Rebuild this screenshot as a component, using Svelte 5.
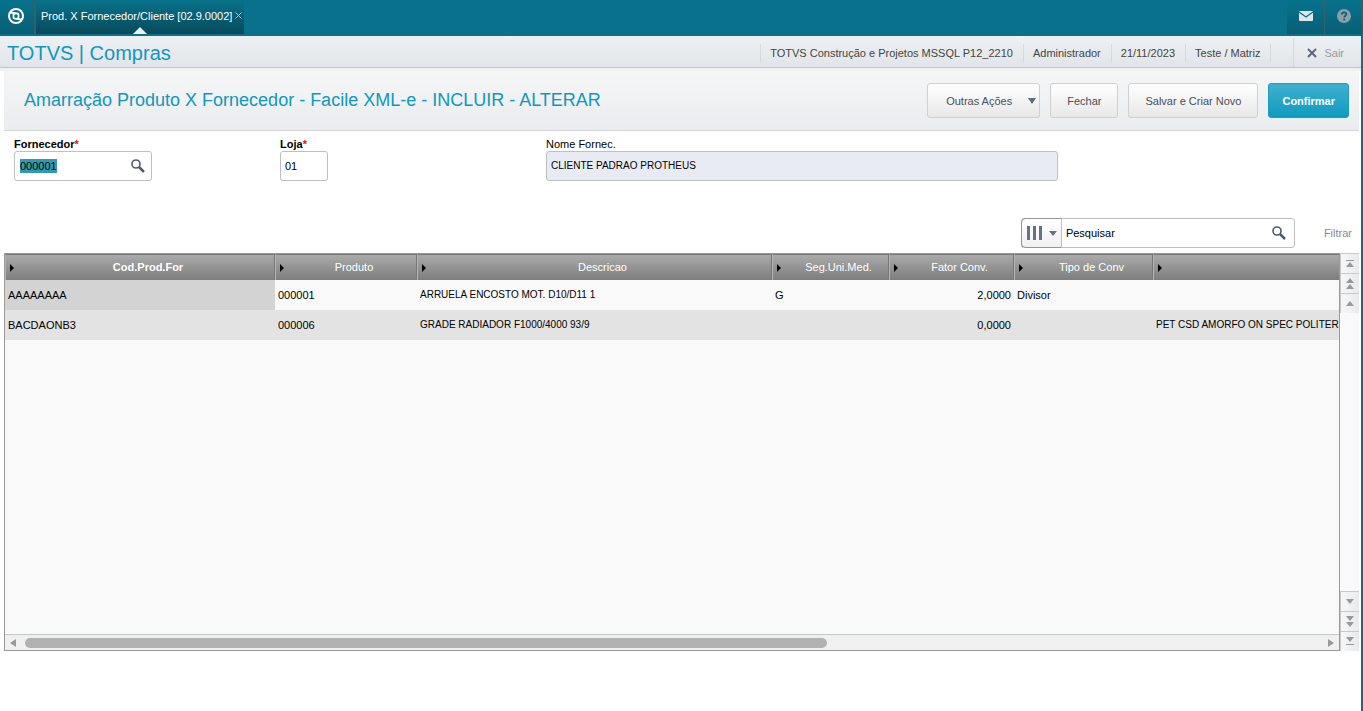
<script>
  import { onMount } from 'svelte';

  let supplierInput;
  let supplier = '000001';
  let store = '01';
  let supplierName = 'CLIENTE PADRAO PROTHEUS';
  let search = 'Pesquisar';

  const session = [
    'TOTVS Construção e Projetos MSSQL P12_2210',
    'Administrador',
    '21/11/2023',
    'Teste / Matriz'
  ];

  const columns = [
    { label: 'Cod.Prod.For', width: 270, sorted: true },
    { label: 'Produto', width: 142 },
    { label: 'Descricao', width: 355, description: true },
    { label: 'Seg.Uni.Med.', width: 117 },
    { label: 'Fator Conv.', width: 125, numeric: true },
    { label: 'Tipo de Conv', width: 139 },
    { label: '', description: true }
  ];

  const rows = [
    ['AAAAAAAA', '000001', 'ARRUELA ENCOSTO MOT. D10/D11 1', 'G', '2,0000', 'Divisor', ''],
    ['BACDAONB3', '000006', 'GRADE RADIADOR F1000/4000 93/9', '', '0,0000', '', 'PET CSD AMORFO ON SPEC POLITER']
  ];

  // Icons of the vertical navigation buttons
  const navUp = [
    { label: 'Primeiro registro', d: 'M1 2h8v1H1zM5 4l4 5H1z' },
    { label: 'Página anterior', d: 'M5 0l4 5H1zM5 6l4 5H1z' },
    { label: 'Registro anterior', d: 'M5 3l4 5H1z' }
  ];
  const navDown = [
    { label: 'Próximo registro', d: 'M1 3h8l-4 5z' },
    { label: 'Próxima página', d: 'M1 0h8l-4 5zM1 6h8l-4 5z' },
    { label: 'Último registro', d: 'M1 1h8l-4 5zM1 8h8v1H1z' }
  ];

  onMount(() => {
    supplierInput.focus();
    supplierInput.select();
  });
</script>

{#snippet magnifier()}
  <svg width="14" height="14" viewBox="0 0 14 14" aria-hidden="true">
    <circle cx="5" cy="5" r="4" fill="none" stroke="#4d5a6e" stroke-width="1.6" />
    <path d="M8 8l5 5" stroke="#4d5a6e" stroke-width="2.5" />
  </svg>
{/snippet}

<div class="app">
  <header class="topbar">
    <button class="logo" aria-label="Menu">
      <svg width="18" height="18" viewBox="0 0 18 18">
        <circle cx="9" cy="9" r="7" fill="none" stroke="#fff" stroke-width="2" />
        <path d="M3 5.500L10.500 6.500q1 .2 1 1V12.500M15 12.500L7.500 11.500q-1-.2-1-1V5.500" fill="none" stroke="#fff" stroke-width="1.8" />
      </svg>
    </button>
    <div class="tab">
      <span>Prod. X Fornecedor/Cliente [02.9.0002]</span>
      <button class="tab-close" aria-label="Fechar aba">
        <svg width="7" height="7" viewBox="0 0 7 7"><path d="M.5 .5l6 6M6.500 .5l-6 6" stroke="#9dc3cd" /></svg>
      </button>
      <i class="tab-arrow"></i>
    </div>
    <div class="spacer"></div>
    <button class="tool" aria-label="Mensagens">
      <svg width="14" height="10" viewBox="0 0 14 10">
        <rect width="14" height="10" rx="1" fill="#dfe6e9" />
        <path d="M0 1l7 5 7-5" fill="none" stroke="#087089" stroke-width="1.4" />
      </svg>
    </button>
    <button class="tool" aria-label="Ajuda">
      <svg width="14" height="14" viewBox="0 0 14 14">
        <circle cx="7" cy="7" r="7" fill="#8d9fa8" />
        <path d="M4.800 5.500c0-3 4.600-2.800 4.500-.2C9.200 6.800 7.200 6.700 7.200 8.600M7.200 9.700v1.800" fill="none" stroke="#0a6076" stroke-width="1.8" />
      </svg>
    </button>
  </header>

  <div class="infobar">
    <h1>TOTVS | Compras</h1>
    <ul class="session">
      {#each session as item}
        <li>{item}</li>
      {/each}
    </ul>
    <button class="exit">
      <svg width="10" height="10" viewBox="0 0 10 10"><path d="M1 1l8 8M9 1L1 9" stroke="#5f6878" stroke-width="2" /></svg>
      Sair
    </button>
  </div>

  <main>
    <section class="titlebar">
      <h2>Amarração Produto X Fornecedor - Facile XML-e - INCLUIR - ALTERAR</h2>
      <div class="actions">
        <button class="btn more">
          Outras Ações
          <svg width="8" height="6" viewBox="0 0 8 6"><path d="M0 0h8L4 6z" fill="#626a7c" /></svg>
        </button>
        <button class="btn">Fechar</button>
        <button class="btn">Salvar e Criar Novo</button>
        <button class="btn primary">Confirmar</button>
      </div>
    </section>

    <form class="fields">
      <div class="field">
        <label class="required" for="supplier">Fornecedor<em>*</em></label>
        <div class="box supplier">
          <input id="supplier" bind:this={supplierInput} bind:value={supplier} />
          <button type="button" aria-label="Pesquisar fornecedor">{@render magnifier()}</button>
        </div>
      </div>
      <div class="field">
        <label class="required" for="store">Loja<em>*</em></label>
        <div class="box store"><input id="store" bind:value={store} /></div>
      </div>
      <div class="field">
        <label for="name">Nome Fornec.</label>
        <div class="box readonly"><input id="name" value={supplierName} readonly /></div>
      </div>
    </form>

    <div class="searchbar">
      <div class="box search">
        <button class="column-picker" aria-label="Colunas">
          <svg width="31" height="14" viewBox="0 0 31 14">
            <path d="M1 0h3v14H1zM7 0h3v14H7zM13 0h3v14h-3zM23 5h8l-4 5z" fill="#677084" />
          </svg>
        </button>
        <input aria-label="Pesquisar" bind:value={search} />
        <button aria-label="Buscar">{@render magnifier()}</button>
      </div>
      <a href="#filtrar">Filtrar</a>
    </div>

    <section class="browse">
      <div class="grid">
        <div class="rows">
          <table>
            <colgroup>
              {#each columns as col}
                <col style={col.width ? `width: ${col.width}px` : ''} />
              {/each}
            </colgroup>
            <thead>
              <tr>
                {#each columns as col}
                  <th class:sorted={col.sorted}>{col.label}</th>
                {/each}
              </tr>
            </thead>
            <tbody>
              {#each rows as row, r}
                <tr>
                  {#each row as cell, c}
                    <td
                      class:numeric={columns[c].numeric}
                      class:description={columns[c].description}
                      class:current={r === 0 && c === 0}
                    >{cell}</td>
                  {/each}
                </tr>
              {/each}
            </tbody>
          </table>
        </div>
        <div class="hscroll">
          <button aria-label="Rolar para a esquerda">
            <svg width="6" height="8" viewBox="0 0 6 8"><path d="M6 0v8L0 4z" fill="#999" /></svg>
          </button>
          <div class="track"><div class="thumb"></div></div>
          <button aria-label="Rolar para a direita">
            <svg width="6" height="8" viewBox="0 0 6 8"><path d="M0 0v8l6-4z" fill="#999" /></svg>
          </button>
        </div>
      </div>
      <nav class="vnav">
        {#each navUp as item}
          <button aria-label={item.label}>
            <svg width="10" height="11" viewBox="0 0 10 11"><path d={item.d} fill="#999" /></svg>
          </button>
        {/each}
        <div class="spacer"></div>
        {#each navDown as item}
          <button aria-label={item.label}>
            <svg width="10" height="11" viewBox="0 0 10 11"><path d={item.d} fill="#999" /></svg>
          </button>
        {/each}
      </nav>
    </section>
  </main>
</div>

<style>
  :global(body) {
    margin: 0;
    background: #fff;
  }

  .app {
    box-sizing: border-box;
    display: flex;
    flex-direction: column;
    min-height: 100vh;
    border-right: 2px solid #0a718d;
    font-family: 'Liberation Sans', Arial, sans-serif;
    font-size: 11px;
    line-height: 14px;
    color: #000;
  }

  .app * {
    box-sizing: border-box;
  }

  button {
    display: flex;
    align-items: center;
    justify-content: center;
    padding: 0;
    border: 0;
    background: none;
    font: inherit;
    color: inherit;
  }

  svg {
    display: block;
    flex: none;
  }

  .spacer {
    flex: 1;
  }

  /* Top bar */
  .topbar {
    display: flex;
    height: 36px;
    padding-bottom: 2px;
    margin-right: -2px;
    background: #0a718d;
  }

  .logo {
    width: 35px;
    padding: 0 3px 2px 0;
    border-right: 1px solid #35616c;
    background: linear-gradient(#08728d, #075f75);
  }

  .tab {
    position: relative;
    display: flex;
    align-items: center;
    gap: 3px;
    margin-left: 1px;
    padding: 0 2px 2px 5px;
    background: linear-gradient(#08728a, #064a5b);
    color: #fff;
  }

  .tab-close {
    padding-bottom: 2px;
  }

  .tab-arrow {
    position: absolute;
    left: 50%;
    bottom: 0;
    margin-left: -7px;
    border: 7px solid transparent;
    border-top: 0;
    border-bottom-color: #eef1f3;
  }

  .tool {
    width: 38px;
    height: 34px;
    padding-bottom: 2px;
    border-right: 1px solid #35616c;
    background: linear-gradient(#08728d, #075f75);
  }

  .infobar {
    display: flex;
    align-items: center;
    height: 32px;
    padding: 2px 0 0 7px;
    border-bottom: 1px solid #bcc5cc;
    background: linear-gradient(#eef1f3, #e1e5e9);
    color: #444;
  }

  h1,
  h2 {
    margin: 0;
    font-weight: normal;
    color: #0f98bd;
  }

  h1 {
    flex: 1;
    font-size: 20px;
    line-height: 24px;
  }

  h2 {
    padding-bottom: 2px;
    font-size: 18px;
    line-height: 22px;
  }

  .session {
    display: flex;
    margin: 0;
    padding: 0;
    list-style: none;
    line-height: 18px;
  }

  .session li {
    padding: 0 10px 0 9px;
    border-right: 1px solid #d6dbd9;
  }

  .session li:first-child {
    border-left: 1px solid #d6dbd9;
  }

  .exit {
    gap: 7px;
    height: 28px;
    margin-left: 22px;
    padding: 0 17px 0 13px;
    border-left: 1px solid #d3d8da;
    color: #949ba5;
  }

  /* Content */
  main {
    display: flex;
    flex: 1;
    flex-direction: column;
    padding: 0 2px 60px 4px;
    border-top: 3px solid #f0f1f2;
  }

  .titlebar {
    display: flex;
    align-items: center;
    justify-content: space-between;
    height: 60px;
    padding: 0 10px 0 20px;
    border-bottom: 1px solid #d5d6d8;
    background: linear-gradient(#f5f6f6, #ebecef);
  }

  .actions {
    display: flex;
    gap: 10px;
  }

  .btn {
    height: 35px;
    padding: 0 16px;
    border: 1px solid #d0d0d0;
    border-radius: 3px;
    background: linear-gradient(#fff, #e8e8e8);
    color: #4b4f58;
  }

  .more {
    gap: 16px;
    padding: 0 3px 0 18px;
  }

  .primary {
    padding: 0 13px;
    border-color: #1f9cbd;
    background: linear-gradient(#3fafce, #0f9bc0);
    font-weight: bold;
    color: #fff;
  }

  .fields {
    display: grid;
    grid-template-columns: 266px 266px 1fr;
    padding: 6px 10px 0;
  }

  .field label {
    display: block;
    height: 14px;
  }

  .required {
    font-weight: bold;
  }

  .required em {
    font-style: normal;
    color: #f00;
  }

  .box {
    display: flex;
    align-items: center;
    height: 30px;
    border: 1px solid #bdbfc1;
    border-radius: 3px;
    background: #fff;
  }

  .box input {
    flex: 1;
    min-width: 0;
    height: 14px;
    padding: 0 4px;
    border: 0;
    outline: 0;
    background: none;
    font: inherit;
    color: #000;
  }

  .box input::selection {
    background: #309ab3;
    color: #000;
  }

  .supplier {
    width: 138px;
    padding-right: 6px;
  }

  .supplier input {
    padding-left: 5px;
  }

  .store {
    width: 48px;
  }

  .readonly {
    max-width: 512px;
    background: #e8ebf4;
  }

  .readonly input {
    font-size: 10px;
  }

  .searchbar {
    display: flex;
    align-items: center;
    justify-content: flex-end;
    gap: 29px;
    margin: 37px 7px 5px 0;
  }

  .search {
    width: 274px;
    padding-right: 8px;
  }

  .column-picker {
    width: 41px;
    height: 30px;
    margin: 0 0 0 -1px;
    border: 1px solid #93959a;
    border-right-color: #bdbfc1;
    border-radius: 5px 0 0 5px;
    background: linear-gradient(#fff, #f0f0f1);
  }

  .searchbar a {
    color: #85888e;
    text-decoration: none;
  }

  /* Grid */
  .browse {
    display: flex;
    flex: 1;
  }

  .grid {
    display: flex;
    flex: 1;
    flex-direction: column;
    min-width: 0;
    border: 1px solid #999;
    background: #f9f9f9;
  }

  .rows {
    flex: 1;
    overflow: hidden;
  }

  table {
    width: 100%;
    table-layout: fixed;
    border-collapse: separate;
    border-spacing: 0;
  }

  th {
    position: relative;
    height: 26px;
    padding: 0 0 2px 16px;
    border-top: 1px solid #777;
    border-right: 1px solid #777;
    border-left: 1px solid #b5b5b5;
    background: linear-gradient(#aaa, #7d7d7d);
    font-weight: normal;
    color: #fff;
  }

  th:last-child {
    border-right: 0;
  }

  th.sorted {
    font-weight: bold;
  }

  th::before {
    content: '';
    position: absolute;
    left: 4px;
    top: 9px;
    border: 4px solid transparent;
    border-right: 0;
    border-left-color: #000;
  }

  td {
    height: 30px;
    padding: 0 3px;
    overflow: hidden;
    white-space: nowrap;
  }

  td:last-child {
    padding-right: 0;
  }

  tbody tr:nth-child(even) {
    background: #e3e3e3;
  }

  .numeric {
    text-align: right;
  }

  .description {
    font-size: 10px;
  }

  .current {
    background: #d3d3d3;
  }

  .hscroll {
    display: flex;
    align-items: center;
    height: 16px;
    border-top: 1px solid #c3c8c9;
    background: #f0f0f0;
  }

  .hscroll button {
    width: 16px;
  }

  .track {
    flex: 1;
    padding: 0 4px;
  }

  .thumb {
    width: 62%;
    height: 10px;
    border-radius: 5px;
    background: #b1b1b1;
  }

  .vnav {
    display: flex;
    flex-direction: column;
    width: 19px;
    background: #f9f9fb;
  }

  .vnav button {
    height: 20px;
    border-top: 1px solid #c8c8c8;
    border-left: 1px solid #c8c8c8;
    background: linear-gradient(90deg, #f7f7f8, #e9eaec);
  }
</style>
